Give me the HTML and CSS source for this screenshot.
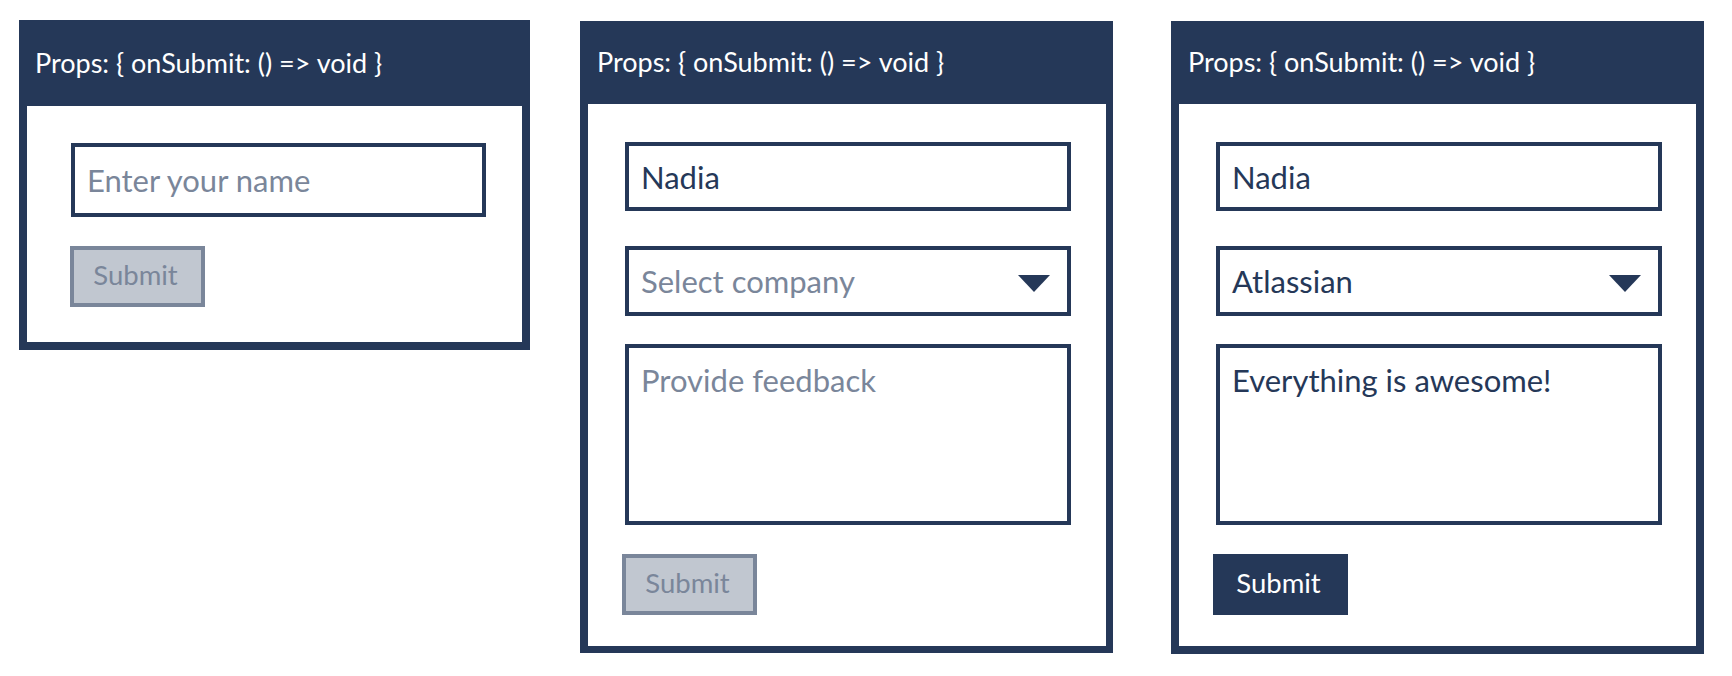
FILE: index.html
```html
<!DOCTYPE html>
<html lang="en">
<head>
<meta charset="utf-8">
<title>Form states</title>
<link rel="stylesheet" href="styles.css">
</head>
<body>
<main class="board">
  <section class="card card-small">
    <header class="card-head">Props: { onSubmit: () =&gt; void }</header>
    <div class="card-body">
      <input class="field field-s" type="text" placeholder="Enter your name">
      <button class="btn btn-s btn-disabled" type="button" disabled>Submit</button>
    </div>
  </section>

  <section class="card card-large card-mid">
    <header class="card-head card-head-l">Props: { onSubmit: () =&gt; void }</header>
    <div class="card-body card-body-l">
      <input class="field field-l" type="text" value="Nadia">
      <div class="field field-l select is-empty">
        <span>Select company</span>
        <svg class="caret" width="32" height="17" viewBox="0 0 32 17"><path d="M0 0 H32 L16 17 Z" fill="#253858"/></svg>
      </div>
      <textarea class="field area" placeholder="Provide feedback"></textarea>
      <button class="btn btn-l btn-disabled" type="button" disabled>Submit</button>
    </div>
  </section>

  <section class="card card-large card-last">
    <header class="card-head card-head-l">Props: { onSubmit: () =&gt; void }</header>
    <div class="card-body card-body-l card-body-last">
      <input class="field field-l" type="text" value="Nadia">
      <div class="field field-l select">
        <span>Atlassian</span>
        <svg class="caret" width="32" height="17" viewBox="0 0 32 17"><path d="M0 0 H32 L16 17 Z" fill="#253858"/></svg>
      </div>
      <textarea class="field area">Everything is awesome!</textarea>
      <button class="btn btn-l btn-active" type="button">Submit</button>
    </div>
  </section>
</main>
</body>
</html>
```

FILE: styles.css
```css
* { box-sizing: border-box; }

html, body {
  margin: 0;
  padding: 0;
  background: #ffffff;
}

body {
  font-family: Lato, "Liberation Sans", sans-serif;
  color: #253858;
}

.board {
  display: flex;
  align-items: flex-start;
  padding: 20px 0 0 19px;
}

.card {
  background: #253858;
  display: flex;
  flex-direction: column;
  padding: 0 8px 8px 8px;
}

.card-small { width: 511px; }

.card-large {
  width: 533px;
  margin-top: 1px;
}

.card-mid {
  margin-left: 50px;
  padding-right: 7px;
  padding-bottom: 7px;
}

.card-last { margin-left: 58px; }

.card-head {
  height: 86px;
  display: flex;
  align-items: center;
  padding-left: 8px;
  padding-bottom: 2px;
  color: #ffffff;
  font-size: 27px;
  white-space: nowrap;
}

.card-head-l {
  height: 83px;
  padding-left: 9px;
}

.card-body {
  background: #ffffff;
  display: flex;
  flex-direction: column;
  align-items: flex-start;
  padding: 37px 36px 35px 44px;
}

.card-body-l {
  padding: 38px 35px 31px 37px;
}

.card-body-last { padding-right: 34px; }

.field {
  font-family: Lato, "Liberation Sans", sans-serif;
  font-size: 31px;
  color: #253858;
  border: 4px solid #253858;
  border-radius: 0;
  background: #ffffff;
  outline: none;
  margin: 0;
  padding: 0 0 0 12px;
}

.field::placeholder { color: #7a869a; opacity: 1; }

.field-s {
  width: 415px;
  height: 74px;
}

.field-l {
  width: 446px;
  height: 69px;
}

.select {
  margin-top: 35px;
  height: 70px;
  display: flex;
  align-items: center;
  justify-content: space-between;
  padding-right: 17px;
}

.select.is-empty span { color: #7a869a; }

.caret {
  display: block;
  flex: none;
  margin-top: 4px;
}

.area {
  width: 446px;
  height: 181px;
  margin-top: 28px;
  padding: 14px 12px 0 12px;
  resize: none;
  line-height: 1.2;
  display: block;
}

.btn {
  font-family: Lato, "Liberation Sans", sans-serif;
  font-size: 27.5px;
  width: 135px;
  height: 61px;
  margin-top: 29px;
  border: 4px solid;
  border-radius: 0;
  padding: 0 4px 4px 0;
  display: flex;
  align-items: center;
  justify-content: center;
}

.btn-s { margin-left: -1px; }
.btn-l { margin-left: -3px; }

.btn-disabled {
  background: #c1c7d0;
  border-color: #7a869a;
  color: #7a869a;
}

.btn-active {
  background: #253858;
  border-color: #253858;
  color: #ffffff;
}
```
